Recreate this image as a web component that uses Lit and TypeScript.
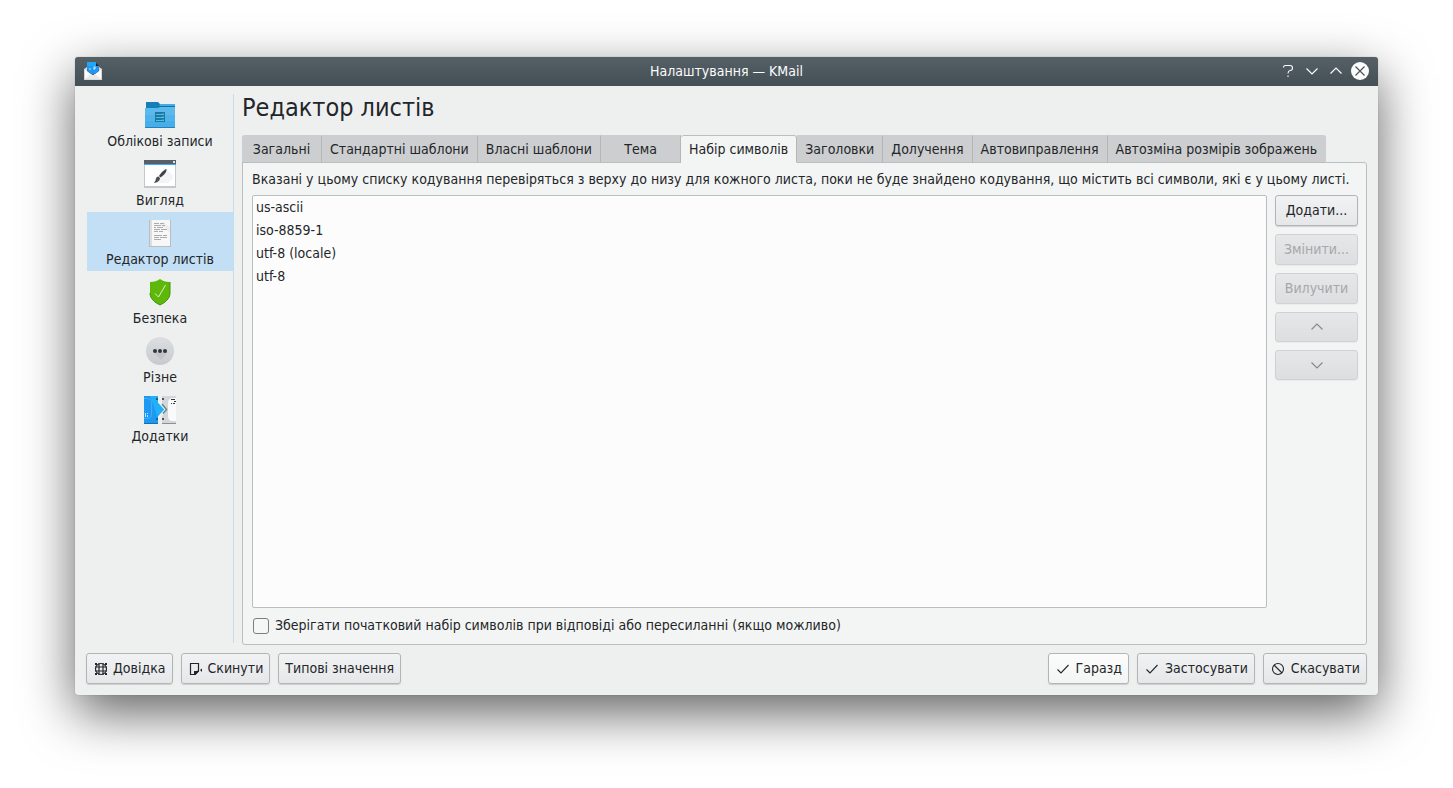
import { LitElement, html, css, svg } from "lit";
import { customElement, state } from "lit/decorators.js";
import { classMap } from "lit/directives/class-map.js";

const kmailIcon = html`<svg class="app-icon" viewBox="0 0 18 18" aria-hidden="true">
  <path d="M0 7 3 5V13H15V5L18 7V18H0Z" fill="#d5d8da" />
  <path d="M1 7.500 9 13.500 17 7.500V17H1Z" fill="#fcfcfc" />
  <path d="M1 17 7 12 9 13.500 11 12 17 17Z" fill="#e6e8e9" />
  <path d="M3 0H12V2L15 4V6A6 6 0 0 1 3 6Z" fill="#1d99f3" />
  <path d="M3 0H12V4H3Z" fill="#22a7f5" />
  <path d="M12 1 15 4H12Z" fill="#1b1e20" />
  <path d="M10 4 12 5 11 8 9 7Z" fill="#a9d9fb" />
  <path d="M5 6h2v2H5z" fill="#6ec1fb" />
</svg>`;

const folderIcon = svg`
  <path d="M2 3H14L16 5H31V12H2Z" fill="#147eb8" />
  <path d="M16 5H31V7H17L15 8Z" fill="#3daee9" />
  <path d="M15 7H31V8H14Z" fill="#1a6fa0" />
  <path d="M1 9H14L16 8H31V29H1Z" fill="#5cb9ec" />
  <path d="M1 16H31V22H1Z" fill="#50b3ea" />
  <path d="M1 22H31V28H1Z" fill="#46aee9" />
  <path d="M1 28H31V29H1Z" fill="#2980b9" />
  <path d="M11 13H21V23H11Z" fill="#197a9f" />
  <path d="M12 15.500H20M12 18.500H20M12 21.500H20" stroke="#5cb9ec" stroke-width="1" />
  <path d="M18 14h2v1h-2zM18 17h2v1h-2zM18 20h2v1h-2z" fill="#3793bd" />`;

const lookIcon = svg`
  <path d="M0 2H32V30H0Z" fill="#c4c9cc" />
  <path d="M1 7H31V28H1Z" fill="#fff" />
  <path d="M0 2H32V6H0Z" fill="#566069" />
  <path d="M0 6H32V7H0Z" fill="#3daee9" />
  <path d="M29 3h2v2h-2z" fill="#dfe3e6" />
  <path d="M23 12 29 17V21L24 25H12Z" fill="#f3f4f5" />
  <path d="M22.500 11C20 11.500 17 15 15 18L16.500 19.500C20 17 23 14 22.500 11Z" fill="#3f4347" />
  <path d="M14.500 18.500C12.500 18.500 12 20 11.500 22.500L10 25C13 24.500 16 23 16 20Z" fill="#4a4e52" />`;

const composerIcon = svg`
  <path d="M5 3H27V30H5Z" fill="#b9bdbf" />
  <path d="M6 3H26V29H6Z" fill="#f7f7f7" />
  <path d="M6 3H8V29H6Z" fill="#dcdedf" />
  <path d="M20 5 26 11V16L16 7Z" fill="#ebedee" />
  <path d="M10 6.500h5M16 6.500h4M10 8.500h7M18 8.500h3M10 10.500h2M13 10.500h6M10 12.500h6M17 12.500h6M10 14.500h4M15 14.500h4M10 18.500h8M19 18.500h4M10 20.500h5M16 20.500h7M10 22.500h7" stroke="#a9acae" stroke-width="1" />`;

const securityIcon = svg`
  <path d="M16 3C18.500 5 22 6 26 6V17C26 23 21 26.500 16 29C11 26.500 6 23 6 17V6C10 6 13.500 5 16 3Z" fill="#5eb80a" />
  <path d="M26 6V17C26 23 21 26.500 16 29C11 26.500 6 23 6 17" fill="none" stroke="#469006" stroke-width="1" />
  <path d="M11 17.500 14.500 21 21.500 9" fill="none" stroke="#dcefc8" stroke-width="1" />`;

const miscIcon = svg`
  <defs><linearGradient id="disc" x1="0" y1="0" x2="0" y2="1"><stop offset="0" stop-color="#dcdee0" /><stop offset="1" stop-color="#c7cbce" /></linearGradient></defs>
  <circle cx="16" cy="16" r="14" fill="url(#disc)" />
  <path d="M9 17 17 25 24 17Z" fill="#c0c4c7" />
  <circle cx="11" cy="16" r="2" fill="#31363b" /><circle cx="16" cy="16" r="2" fill="#31363b" /><circle cx="21" cy="16" r="2" fill="#31363b" />`;

const addonsIcon = svg`
  <path d="M0 2H14V9L20 15.500 14 22V30H0Z" fill="#1d99f3" />
  <path d="M6 2H14V9L20 15.500 14 22V24Z" fill="#22b1f8" />
  <path d="M0 29H14V30H0Z" fill="#1a6fa0" />
  <path d="M0 4.500H4Q7.500 5 7.500 9V21Q7 24.500 4 24.500H0" fill="none" stroke="#46acf6" stroke-width="1" />
  <path d="M1 19v4h1v-4zM3 19v1h1v-1zM3 21v2h1v-2z" fill="#bfe4fd" />
  <path d="M12 4h2v2h-2zM12 24h2v2h-2z" fill="#1b5f8c" />
  <path d="M18 2H32V30H18V22L23 15.500 18 9Z" fill="#d4d6d9" />
  <path d="M18 10 22.500 15.500 19 19.500" fill="none" stroke="#59898d" stroke-width="1.500" />
  <path d="M32 4H28Q24 5 24 9V23Q25 27 28 27H32Z" fill="#fafafa" />
  <path d="M18 29H32V30H18Z" fill="#87919a" />
  <path d="M18 4h2v2h-2zM18 24h2v2h-2z" fill="#4d5357" />
  <path d="M27 5.500h4M30 7.500h2M27 9.500h1M29 9.500h2" stroke="#31363b" stroke-width="1" />`;

const helpIcon = html`<svg class="glyph" viewBox="0 0 16 16" aria-hidden="true">
  <circle cx="8" cy="8" r="5.500" fill="none" stroke="currentColor" stroke-width="1.200" />
  <path d="M6 2V14M10 2V14M2 6H14M2 10H14" fill="none" stroke="currentColor" stroke-width="1.200" />
  <path d="M2 2h2v2h-2zM12 2h2v2h-2zM2 12h2v2h-2zM12 12h2v2h-2z" fill="currentColor" />
</svg>`;

const resetIcon = html`<svg class="glyph" viewBox="0 0 16 16" aria-hidden="true">
  <path d="M2.500 2.500H10.500V9.500L7 13.500H2.500Z" fill="none" stroke="currentColor" stroke-width="1.200" />
  <path d="M6 14V10H11V10.500L7.500 14Z" fill="currentColor" />
  <path d="M12 9 14 7.500V11Z" fill="currentColor" />
</svg>`;

const checkIcon = html`<svg class="glyph" viewBox="0 0 16 16" aria-hidden="true">
  <path d="M2.500 8.500 6 12 13.500 4" fill="none" stroke="currentColor" stroke-width="1.100" />
</svg>`;

const cancelIcon = html`<svg class="glyph" viewBox="0 0 16 16" aria-hidden="true">
  <circle cx="8" cy="8" r="5.500" fill="none" stroke="currentColor" stroke-width="1.100" />
  <path d="M4 4 12 12" stroke="currentColor" stroke-width="1.100" />
</svg>`;

const sections = [
  { label: "Облікові записи", icon: folderIcon },
  { label: "Вигляд", icon: lookIcon },
  { label: "Редактор листів", icon: composerIcon },
  { label: "Безпека", icon: securityIcon },
  { label: "Різне", icon: miscIcon },
  { label: "Додатки", icon: addonsIcon },
];

const tabs = [
  "Загальні",
  "Стандартні шаблони",
  "Власні шаблони",
  "Тема",
  "Набір символів",
  "Заголовки",
  "Долучення",
  "Автовиправлення",
  "Автозміна розмірів зображень",
];

const charsets = ["us-ascii", "iso-8859-1", "utf-8 (locale)", "utf-8"];

@customElement("app-root")
export class AppRoot extends LitElement {
  @state() private section = 2;
  @state() private tab = 4;

  static styles = css`
    :host {
      display: flex;
      box-sizing: border-box;
      min-height: 100vh;
      padding: 57px 75px 93px;
      background: #fff;
      color: #232629;
      font-family: "DejaVu Sans Condensed", "DejaVu Sans", sans-serif;
      font-size: 14px;
      line-height: 17px;
    }
    * {
      box-sizing: border-box;
    }
    button {
      margin: 0;
      font: inherit;
      color: inherit;
      white-space: nowrap;
    }
    .window {
      flex: 1;
      min-width: 0;
      display: flex;
      flex-direction: column;
      border-radius: 3px;
      background: #eef0f0;
      box-shadow: 0 0 1px rgba(0, 0, 0, 0.4), 0 18px 52px rgba(0, 0, 0, 0.62);
    }
    .titlebar {
      display: grid;
      grid-template-columns: 1fr auto 1fr;
      align-items: center;
      height: 29px;
      padding: 0 9px 1px;
      border-radius: 3px 3px 0 0;
      background: linear-gradient(#545f67, #455055);
      color: #fcfcfc;
    }
    .app-icon {
      width: 18px;
      height: 18px;
    }
    .title {
      margin: 0;
      font-size: 14px;
      font-weight: 400;
    }
    .controls {
      display: flex;
      justify-content: flex-end;
      gap: 6px;
    }
    .control {
      width: 18px;
      height: 18px;
      padding: 0;
      border: 0;
      background: none;
    }
    .control svg {
      display: block;
      width: 18px;
      height: 18px;
    }
    .body {
      flex: 1;
      display: flex;
      padding: 8px 11px 0 12px;
    }
    .sidebar {
      flex: none;
      width: 147px;
      margin-bottom: 2px;
      border-right: 1px solid #c5dcec;
    }
    .section {
      display: flex;
      flex-direction: column;
      align-items: center;
      width: 100%;
      height: 59px;
      padding: 5px 0 0;
      border: 0;
      background: none;
    }
    .section.current {
      background: #c2dff5;
    }
    .section svg {
      flex: none;
      width: 32px;
      height: 32px;
      margin-bottom: 2px;
    }
    .main {
      flex: 1;
      min-width: 0;
      display: flex;
      flex-direction: column;
      padding-left: 8px;
    }
    .heading {
      margin: 0 0 14px;
      font-size: 25px;
      line-height: 27px;
      font-weight: 400;
    }
    .tabs {
      display: flex;
      height: 28px;
      margin-bottom: -1px;
      z-index: 1;
    }
    .tab {
      min-width: 80px;
      padding: 0 8px;
      border: 1px solid #cdced0;
      border-left: 0;
      border-right-color: #b4b7b8;
      border-bottom-color: #bbbebf;
      background: #cdced0;
    }
    .tab:first-child {
      border-top-left-radius: 3px;
    }
    .tab:last-child {
      border-right-color: #cdced0;
      border-top-right-radius: 3px;
    }
    .tab.current {
      border-top-color: #bbbebf;
      border-bottom-color: #f3f5f4;
      border-radius: 3px 3px 0 0;
      background: #f3f5f4;
    }
    .pane {
      flex: 1;
      display: flex;
      flex-direction: column;
      padding: 8px 8px 10px 9px;
      border: 1px solid #bbbebf;
      border-radius: 0 3px 3px 3px;
      background: #f3f5f4;
    }
    .hint {
      margin: 0 0 7px;
      white-space: nowrap;
    }
    .columns {
      flex: 1;
      display: flex;
      gap: 8px;
    }
    .list {
      flex: 1;
      margin: 0;
      padding: 0;
      border: 1px solid #bbbebf;
      border-radius: 2px;
      background: #fcfcfc;
      list-style: none;
    }
    .item {
      padding: 3px;
    }
    .actions {
      display: flex;
      flex-direction: column;
      gap: 8px;
      width: 83px;
    }
    .button {
      display: flex;
      align-items: center;
      justify-content: center;
      gap: 4px;
      height: 31px;
      padding: 0 6px;
      border: 1px solid #b2b5b6;
      border-radius: 3px;
      background: linear-gradient(#f1f2f3, #e6e7e8);
      box-shadow: 0 1px 1px rgba(0, 0, 0, 0.14);
    }
    .button:disabled {
      border-color: #cfd1d2;
      background: linear-gradient(#e5e7e8, #dddee0);
      box-shadow: 0 1px 1px rgba(0, 0, 0, 0.04);
      color: #a5a8aa;
    }
    .button.primary {
      background: linear-gradient(#fcfcfc, #f3f4f4);
    }
    .button.arrow {
      height: 30px;
      color: #84888a;
    }
    .trailing .button {
      gap: 5px;
    }
    .glyph {
      flex: none;
      width: 16px;
      height: 16px;
    }
    .keep {
      display: flex;
      align-items: center;
      gap: 6px;
      margin-top: 9px;
      padding-left: 1px;
    }
    .check {
      appearance: none;
      width: 16px;
      height: 16px;
      margin: 0;
      border: 1px solid #7b7f81;
      border-radius: 3px;
      background: #f5f6f6;
    }
    .footer {
      display: flex;
      justify-content: space-between;
      padding: 8px 11px 11px;
    }
    .group {
      display: flex;
      gap: 8px;
    }
  `;

  render() {
    return html`
      <div class="window">
        <header class="titlebar">
          ${kmailIcon}
          <h1 class="title">Налаштування — KMail</h1>
          <div class="controls">
            <button class="control" aria-label="Довідка">
              <svg viewBox="0 0 18 18"><path d="M4.500 5.500Q4.500 3.500 6.500 3.500H11Q13.500 3.500 13.500 6T11 8.500Q9 9 9 11.500M9 13.500V15" fill="none" stroke="#fcfcfc" stroke-width="1.100" /></svg>
            </button>
            <button class="control" aria-label="Згорнути">
              <svg viewBox="0 0 18 18"><path d="M3.500 6.500 9 12 14.500 6.500" fill="none" stroke="#fcfcfc" stroke-width="1.200" /></svg>
            </button>
            <button class="control" aria-label="Розгорнути">
              <svg viewBox="0 0 18 18"><path d="M3.500 11.500 9 6 14.500 11.500" fill="none" stroke="#fcfcfc" stroke-width="1.200" /></svg>
            </button>
            <button class="control" aria-label="Закрити">
              <svg viewBox="0 0 18 18"><circle cx="9" cy="9" r="9" fill="#fcfcfc" /><path d="M4.500 4.500 13.500 13.500M13.500 4.500 4.500 13.500" stroke="#4a545b" stroke-width="1.200" /></svg>
            </button>
          </div>
        </header>
        <div class="body">
          <nav class="sidebar">
            ${sections.map(
              (s, i) => html`<button class=${classMap({ section: true, current: i === this.section })} @click=${() => (this.section = i)}>
                <svg viewBox="0 0 32 32" aria-hidden="true">${s.icon}</svg>
                <span>${s.label}</span>
              </button>`
            )}
          </nav>
          <main class="main">
            <h2 class="heading">${sections[this.section].label}</h2>
            <div class="tabs" role="tablist">
              ${tabs.map(
                (t, i) => html`<button role="tab" aria-selected=${i === this.tab} class=${classMap({ tab: true, current: i === this.tab })} @click=${() => (this.tab = i)}>${t}</button>`
              )}
            </div>
            <section class="pane" role="tabpanel">
              <p class="hint" id="hint">Вказані у цьому списку кодування перевіряться з верху до низу для кожного листа, поки не буде знайдено кодування, що містить всі символи, які є у цьому листі.</p>
              <div class="columns">
                <ul class="list" role="listbox" aria-labelledby="hint">
                  ${charsets.map((c) => html`<li class="item" role="option">${c}</li>`)}
                </ul>
                <div class="actions">
                  <button class="button">Додати...</button>
                  <button class="button" disabled>Змінити...</button>
                  <button class="button" disabled>Вилучити</button>
                  <button class="button arrow" disabled aria-label="Вгору">
                    <svg class="glyph" viewBox="0 0 16 16"><path d="M2.500 10.500 8 5 13.500 10.500" fill="none" stroke="currentColor" stroke-width="1.100" /></svg>
                  </button>
                  <button class="button arrow" disabled aria-label="Вниз">
                    <svg class="glyph" viewBox="0 0 16 16"><path d="M2.500 5.500 8 11 13.500 5.500" fill="none" stroke="currentColor" stroke-width="1.100" /></svg>
                  </button>
                </div>
              </div>
              <label class="keep"><input class="check" type="checkbox" />Зберігати початковий набір символів при відповіді або пересиланні (якщо можливо)</label>
            </section>
          </main>
        </div>
        <footer class="footer">
          <div class="group">
            <button class="button">${helpIcon}Довідка</button>
            <button class="button">${resetIcon}Скинути</button>
            <button class="button">Типові значення</button>
          </div>
          <div class="group trailing">
            <button class="button primary">${checkIcon}Гаразд</button>
            <button class="button">${checkIcon}Застосувати</button>
            <button class="button">${cancelIcon}Скасувати</button>
          </div>
        </footer>
      </div>
    `;
  }
}
